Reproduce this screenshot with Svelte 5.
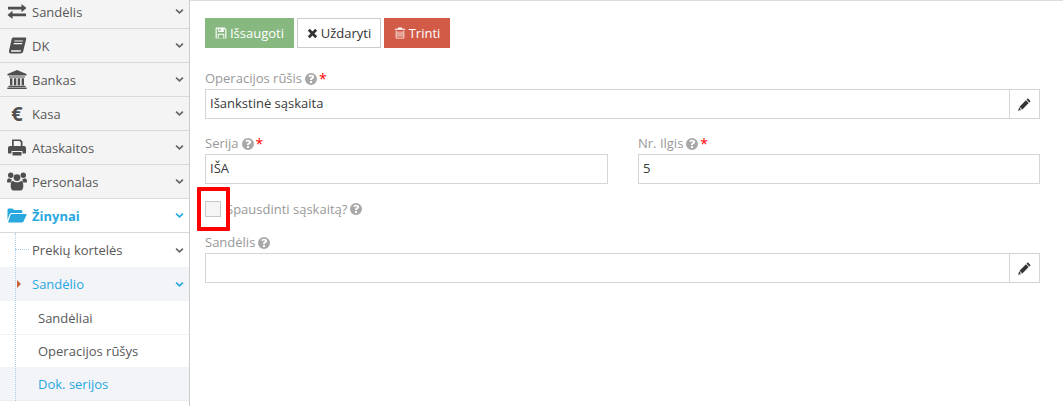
<script>
  const q = 'M12 2a10 10 0 1 0 0 20 10 10 0 0 0 0-20zm1.700 16.500h-3.400v-3.200h3.400zm3-8.200c-.4.700-1.100 1.200-1.800 1.600-.7.400-1.200.8-1.200 1.300v.6h-3.400v-.9c0-1.400.8-2.100 1.700-2.700.8-.4 1.500-.8 1.500-1.500 0-.7-.7-1.100-1.500-1.100-1 0-1.700.5-2.300 1.300L7.600 7.300C8.600 5.800 10.100 5 12.200 5c2.600 0 5 1.500 5 3.700 0 .6-.2 1.100-.5 1.600z';
</script>

{#snippet help()}
  <svg class="help" viewBox="2 2 20 20"><path d={q} fill-rule="evenodd" /></svg>
{/snippet}
{#snippet star()}
  <span class="star">*</span>
{/snippet}
{#snippet chev(open)}
  <svg class="chev" class:open viewBox="0 0 10 7"><path d="M1.200 1.500 5 5 8.800 1.500" fill="none" stroke="currentColor" stroke-width="1.900" /></svg>
{/snippet}
{#snippet pencil()}
  <svg class="pencil" viewBox="0 0 14 14"><path d="M10.600.4 13.600 3.400 12.200 4.800 9.200 1.800z" fill="#333"/><path d="M8.500 2.500 11.500 5.500 4.700 12.300 1.700 9.300z" fill="#333"/><path d="M1.200 10 4 12.800.2 13.800z" fill="#333"/><path d="M2.300 11.700l.9.900-1.300.3z" fill="#fff"/></svg>
{/snippet}

<div class="page">
  <nav class="side">
    <div class="item first">
      <svg class="ic" viewBox="0 0 20 16"><path d="M1 3.300h13.500V.4L19.500 4.600l-5 4.200V5.900H1zM19 12.700H5.500v2.900L.5 11.400l5-4.200v2.900H19z"/></svg>
      <span class="t">Sandėlis</span>{@render chev(false)}
    </div>
    <div class="item">
      <svg class="ic" viewBox="0 0 20 17"><path d="M6.500.5h11.500c1 0 1.400.6 1.200 1.400l-3 12.300c-.3 1.300-1.400 2.300-2.800 2.300H4C2.500 16.500 1.700 15.300 2 13.800L4.700 2C5 1 5.500.5 6.500.5zm1 3-.3 1.100h8.500l.3-1.100zm-.7 2.600-.3 1.100H15l.3-1.100zM4.300 14.800h9.300l.4-1.600H4.500c-.6 0-.7 1.600-.2 1.600z" fill-rule="evenodd"/></svg>
      <span class="t">DK</span>{@render chev(false)}
    </div>
    <div class="item">
      <svg class="ic bank" viewBox="0 0 20 19"><path d="M10 0l9.500 4v1.400h-19V4zM2 6.400h16v1H2zM3 8.200h2.400v7H3zM6.900 8.200h2.400v7H6.900zM10.700 8.200h2.400v7h-2.400zM14.600 8.200H17v7h-2.400zM1.500 15.800h17v1.200h-17zM.3 17.500h19.400V19H.3z"/></svg>
      <span class="t">Bankas</span>{@render chev(false)}
    </div>
    <div class="item">
      <span class="euro">€</span>
      <span class="t">Kasa</span>{@render chev(false)}
    </div>
    <div class="item">
      <svg class="ic" viewBox="0 0 20 17"><path d="M5 .5h8.500l2 2V7.500h-1.700V3.200l-1.400-1.200H6.700v5.500H5zM3 7h14c1.200 0 2 .8 2 2v4.500c0 .6-.4 1-1 1h-2.500V12h-11v2.500H2c-.6 0-1-.4-1-1V9c0-1.200.8-2 2-2zM5.500 13h9v3.500h-9z"/></svg>
      <span class="t">Ataskaitos</span>{@render chev(false)}
    </div>
    <div class="item">
      <svg class="ic users" viewBox="0 0 20 19"><circle cx="3.700" cy="3.200" r="2.700"/><circle cx="16.300" cy="3.200" r="2.700"/><circle cx="10" cy="5.600" r="3.400"/><path d="M0 9.500C0 7.500 1 6.300 2.200 6.300c.8.700 1.700 1 2.700 1-.5 1-.8 2.100-.8 3.200H1.200C.5 10.500 0 10.100 0 9.500zM20 9.500c0-2-1-3.200-2.200-3.200-.8.700-1.700 1-2.700 1 .5 1 .8 2.100.8 3.200h2.900c.7 0 1.200-.4 1.200-1zM6 8.700c1 1 2.500 1.500 4 1.500s3-.5 4-1.500c1.700.2 2.300 2.300 2.300 5.200 0 2.500-1 4.600-2.800 4.600h-7C4.700 18.500 3.700 16.400 3.700 13.900c0-2.900.6-5 2.300-5.200z"/></svg>
      <span class="t">Personalas</span>{@render chev(false)}
    </div>
    <div class="item active">
      <svg class="ic" viewBox="0 0 20 15"><path d="M.5 12V2c0-.9.6-1.500 1.500-1.500h3.500L7 2h7c.8 0 1.300.6 1.300 1.300V5H5C3.800 5 3 5.500 2.500 6.500zM5 6h14c.5 0 .8.400.5.900l-3 6.500c-.4.700-.9 1.100-1.700 1.100H2c-.7 0-1-.5-.7-1.100L3.500 7C3.800 6.300 4.300 6 5 6z"/></svg>
      <b class="t">Žinynai</b>{@render chev(true)}
    </div>
    <div class="sub">
      <div class="row plain">
        <span class="tick"></span>
        <span class="t">Prekių kortelės</span>{@render chev(false)}
      </div>
      <div class="row open">
        <span class="arrow"></span>
        <span class="t">Sandėlio</span>{@render chev(true)}
      </div>
      <div class="leaf tall">Sandėliai</div>
      <div class="leaf">Operacijos rūšys</div>
      <div class="leaf current">Dok. serijos</div>
    </div>
  </nav>

  <main>
    <div class="actions">
      <button class="btn save">
        <svg class="bi" viewBox="0 0 14 14"><path d="M1.500.7h9.600L13.300 3v9.800c0 .3-.2.500-.5.500H1.200c-.3 0-.5-.2-.5-.5V1.500c0-.5.300-.8.800-.8zM2 2v11h1.200V8h7.600v5H12V3.500L10.500 2h-.3v3.700H3.800V2zM5 2v2.700h1.600V2zM4.300 9v4h5.400V9z" fill="currentColor" fill-rule="evenodd"/></svg>
        Išsaugoti
      </button>
      <button class="btn close">
        <svg class="bi x" viewBox="0 0 12 12"><path d="M2 2l8 8M10 2l-8 8" stroke="#333" stroke-width="3" fill="none"/></svg>
        Uždaryti
      </button>
      <button class="btn del">
        <svg class="bi" viewBox="0 0 14 14"><path d="M5 .5h4l1 1.500h3v1.200H1V2h3zM2 4h1v8.500h8V4h1v8.500c0 .6-.4 1-1 1H3c-.6 0-1-.4-1-1zm2.200 1.200h1v6.300h-1zm2.300 0h1v6.300h-1zm2.300 0h1v6.300h-1z" fill="currentColor" fill-rule="evenodd"/></svg>
        Trinti
      </button>
    </div>

    <div class="field">
      <div class="label">Operacijos rūšis {@render help()} {@render star()}</div>
      <div class="group">
        <div class="input grow">Išankstinė sąskaita</div>
        <div class="addon">{@render pencil()}</div>
      </div>
    </div>

    <div class="cols">
      <div class="field">
        <div class="label">Serija {@render help()} {@render star()}</div>
        <div class="input">IŠA</div>
      </div>
      <div class="field">
        <div class="label">Nr. Ilgis {@render help()} {@render star()}</div>
        <div class="input">5</div>
      </div>
    </div>

    <div class="check">
      <span class="box"></span>
      <span class="label inline">Spausdinti sąskaitą? {@render help()}</span>
      <span class="mark"></span>
    </div>

    <div class="field last">
      <div class="label">Sandėlis {@render help()}</div>
      <div class="group">
        <div class="input grow"></div>
        <div class="addon">{@render pencil()}</div>
      </div>
    </div>
  </main>
</div>

<style>
  :global(body) { margin: 0; background: #fff; }
  .page {
    display: flex;
    width: 1063px;
    height: 406px;
    overflow: hidden;
    font-family: "Open Sans", sans-serif;
    font-size: 13px;
    color: #393939;
  }
  .side {
    flex: none;
    box-sizing: border-box;
    width: 190px;
    height: 406px;
    border-right: 1px solid #ccc;
    background: #fff;
    overflow: hidden;
  }
  .item {
    display: flex;
    align-items: center;
    box-sizing: border-box;
    height: 34px;
    border-bottom: 1px solid #d9d9d9;
    background: #f4f4f4;
    color: #585858;
    position: relative;
  }
  .item.first { height: 29px; padding-bottom: 5px; }
  .ic { flex: none; width: 20px; height: 17px; margin-left: 7px; fill: #4f4f4f; }
  .bank { height: 19px; }
  .users { height: 19px; }
  .euro { flex: none; width: 20px; margin-left: 7px; text-align: center; font-size: 20px; font-weight: 700; color: #4f4f4f; line-height: 18px; }
  .t { margin-left: 5px; flex: 1; }
  .chev { flex: none; width: 9px; height: 7px; margin-right: 5px; color: #666; }
  .chev.open { color: #29a8e0; }
  .item.active { background: #fff; color: #29a8e0; }
  .item.active .ic { fill: #29a8e0; }
  .item.active b { font-weight: 700; }

  .sub {
    position: relative;
    background: #fff;
  }
  .sub::before {
    content: "";
    position: absolute;
    left: 15px;
    top: 0;
    bottom: 0;
    border-left: 1px dotted #a6cfee;
    z-index: 1;
  }
  .row {
    display: flex;
    align-items: center;
    height: 34px;
    box-sizing: border-box;
    padding-left: 32px;
    position: relative;
  }
  .row .t { margin-left: 0; }
  .row.plain { color: #585858; }
  .row.open { background: #f2f4f8; color: #29a8e0; }
  .tick {
    position: absolute;
    left: 15px;
    top: 16px;
    width: 14px;
    border-top: 1px dotted #a6cfee;
  }
  .arrow {
    position: absolute;
    left: 17px;
    top: 13px;
    border-left: 4px solid #c8643c;
    border-top: 4px solid transparent;
    border-bottom: 4px solid transparent;
  }
  .leaf {
    display: flex;
    align-items: center;
    box-sizing: border-box;
    height: 33px;
    padding-left: 38px;
    color: #585858;
    border-bottom: 1px dotted #e8e8e8;
  }
  .leaf.tall { height: 34px; padding-top: 1px; }
  .leaf.current { background: #f2f4f8; color: #29a8e0; }

  main {
    flex: 1;
    min-width: 0;
    box-sizing: border-box;
    border-top: 1px solid #ddd;
    padding: 17px 23px 0 15px;
    position: relative;
  }
  .actions { display: flex; gap: 3px; margin-bottom: 22px; }
  .btn {
    display: flex;
    align-items: center;
    justify-content: center;
    gap: 3px;
    box-sizing: border-box;
    height: 30px;
    padding: 0;
    border: 1px solid transparent;
    font: inherit;
    color: #fff;
  }
  .save { width: 89px; background: #87b87f; }
  .close { width: 84px; background: #fff; border-color: #ccc; color: #333; }
  .del { width: 66px; background: #d15b47; }
  .bi { width: 12px; height: 12px; }
  .x { width: 11px; height: 11px; }

  .label { display: flex; align-items: center; gap: 3px; height: 19px; padding-bottom: 2px; box-sizing: border-box; color: #999; line-height: 17px; }
  .help { width: 12px; height: 12px; fill: #a8a8a8; flex: none; }
  .star { color: #f00; font-size: 14px; line-height: 14px; margin-left: -1px; }
  .input {
    box-sizing: border-box;
    height: 30px;
    border: 1px solid #d5d5d5;
    padding: 0 5px 0 4px;
    line-height: 26px;
    color: #393939;
    background: #fff;
  }
  .group { display: flex; }
  .grow { flex: 1; min-width: 0; }
  .addon {
    flex: none;
    display: flex;
    align-items: center;
    justify-content: center;
    box-sizing: border-box;
    width: 31px;
    height: 30px;
    border: 1px solid #d5d5d5;
    margin-left: -1px;
  }
  .pencil { width: 13px; height: 13px; }
  .cols {
    display: grid;
    grid-template-columns: 403px 402px;
    column-gap: 30px;
    margin-top: 16px;
  }
  .check {
    display: flex;
    align-items: center;
    height: 16px;
    margin-top: 17px;
    position: relative;
  }
  .box {
    flex: none;
    box-sizing: border-box;
    width: 16px;
    height: 16px;
    border: 1px solid #c8c8c8;
    background: #f5f5f5;
    margin-right: 5px;
  }
  .inline { padding-bottom: 0; line-height: 18px; }
  .mark {
    position: absolute;
    left: -8px;
    top: -14px;
    box-sizing: border-box;
    width: 33px;
    height: 44px;
    border: 4px solid #f00;
    border-radius: 1px;
  }
  .last { margin-top: 17px; }
</style>
